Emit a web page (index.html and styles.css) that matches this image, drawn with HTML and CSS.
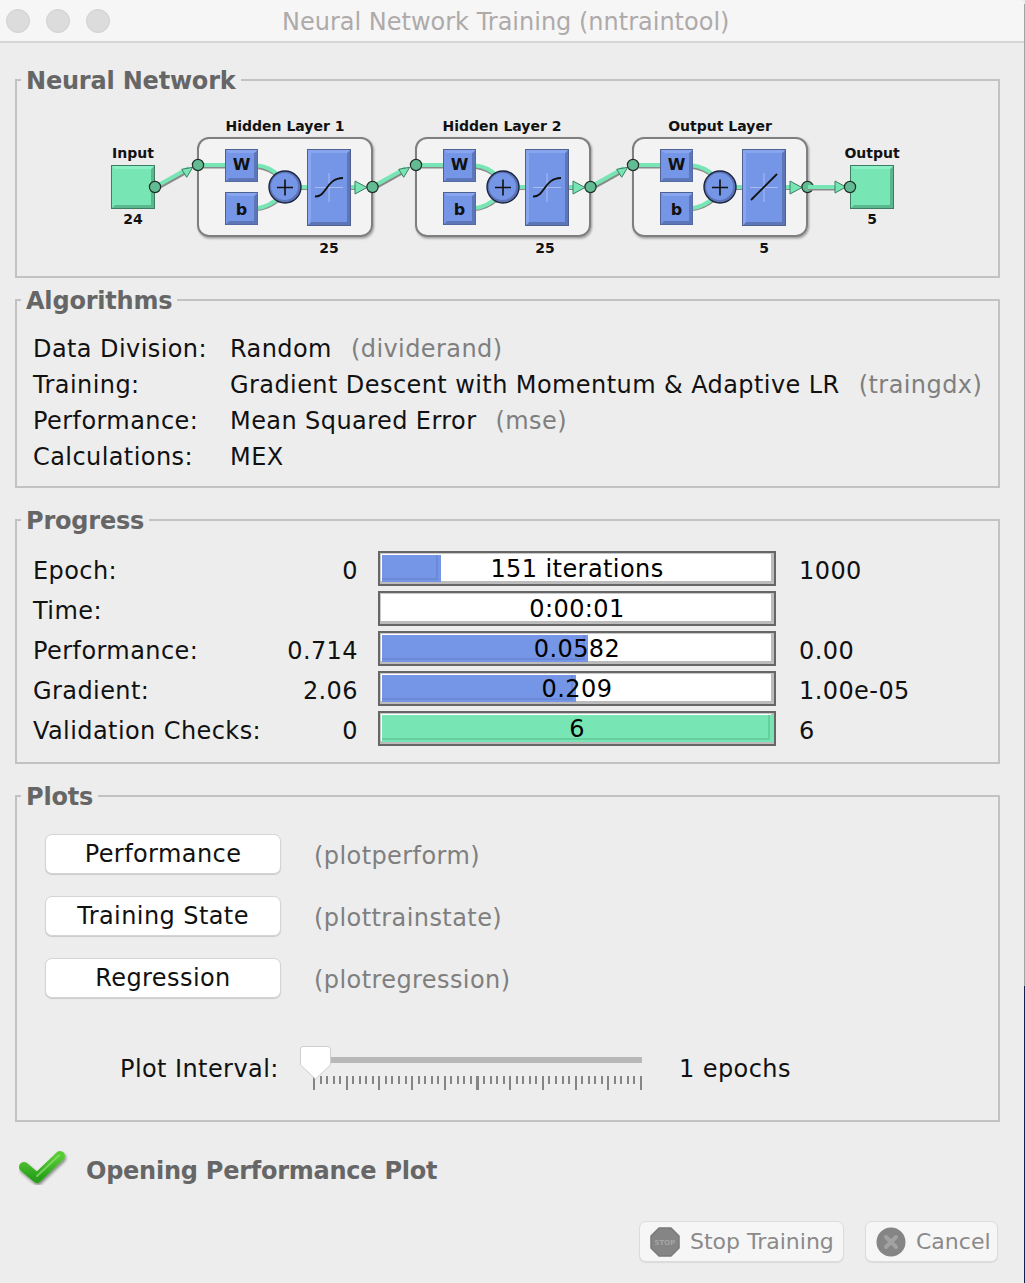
FILE: index.html
```html
<!DOCTYPE html>
<html lang="en">
<head>
<meta charset="utf-8">
<title>Neural Network Training (nntraintool)</title>
<link rel="stylesheet" href="styles.css">
</head>
<body>
<header class="titlebar">
  <div class="lights"><span class="light"></span><span class="light"></span><span class="light"></span></div>
  <div class="title">Neural Network Training (nntraintool)</div>
</header>
<main class="main">
  <fieldset class="group group-net">
    <legend>Neural Network</legend>
    <svg class="diagram" width="981" height="181" viewBox="17 95 981 181">
      <defs>
        <filter id="soft" x="-10%" y="-10%" width="120%" height="120%"><feDropShadow dx="1" dy="1.5" stdDeviation="1" flood-color="#000" flood-opacity=".35"/></filter>
        <g id="bevelS">
          <rect x="0.5" y="0.5" width="32" height="32" fill="#7596e6" stroke="#4f6091"/>
          <path d="M1 32.5L4 29H29L32.5 32.5Z M32.5 1L29 4V29L32.5 32.5Z" fill="#5d76b8"/>
          <path d="M1 1L4 4H29L32.5 1Z" fill="#87a6ef"/>
        </g>
        <g id="bevelT">
          <rect x="0.5" y="0.5" width="43" height="76" fill="#7596e6" stroke="#4f6091"/>
          <path d="M1 76L4 73H40L43 76Z M43 1L40 4V73L43 76Z" fill="#5d76b8"/>
          <path d="M1 1L4 4H40L43 1Z M1 1L4 4V73L1 76Z" fill="#87a6ef"/>
          <path d="M8 38.5H36M22 24V53" stroke="#a9bdf0" stroke-width="1" fill="none"/>
        </g>
        <g id="square">
          <rect x="0.5" y="0.5" width="43" height="43" fill="#78e6b4" stroke="#3f7d62"/>
          <path d="M1 43L4 40H40L43 43Z M43 1L40 4V40L43 43Z" fill="#5ab78e"/>
          <path d="M1 1L4 4H40L43 1Z" fill="#8cf0c6"/>
        </g>
        <g id="node"><circle r="5.6" fill="#62bb92" stroke="#1f2f28" stroke-width="1.2"/></g>
        <g id="jump">
          <path d="M0 2L34 -17" stroke="#8a8a8a" stroke-width="4.5" fill="none"/>
          <path d="M0 0L34 -19" stroke="#78e6b4" stroke-width="4" fill="none"/>
          <path d="M26.7 -17.7L37.7 -19.7L31.7 -9.7Z" fill="#78e6b4" stroke="#3f7d62"/>
        </g>
        <g id="layer">
          <rect x="0" y="0" width="174" height="98" rx="11" fill="#f3f3f3" stroke="#7f7f7f" stroke-width="2" filter="url(#soft)"/>
          <path d="M0 28.5H28M60 29Q72 31 80 38M60 71Q72 69 80 62M100 50H110M152 50H158" stroke="#8a8a8a" stroke-width="4" fill="none"/>
          <path d="M0 27H28M60 27.5Q72 29 80 37M60 70Q72 68 80 60M100 49H110M152 49H158" stroke="#78e6b4" stroke-width="4" fill="none"/>
          <use href="#bevelS" x="27" y="11"/>
          <use href="#bevelS" x="27" y="54"/>
          <circle cx="87" cy="49" r="16" fill="#5c74b6" stroke="#1c2440" stroke-width="1.4"/>
          <circle cx="86.500" cy="48.500" r="13.500" fill="#7596e6"/>
          <path d="M79 49.500H95M87 41.500V57.500" stroke="#111" stroke-width="1.6" fill="none"/>
          <use href="#bevelT" x="109" y="11"/>
          <path d="M157 43L169 49.500L157 56Z" fill="#78e6b4" stroke="#3f7d62"/>
          <use href="#node" x="0" y="27"/>
          <use href="#node" x="174.500" y="49"/>
        </g>
      </defs>
      <use href="#square" x="111" y="165"/>
      <use href="#square" x="850" y="165"/>
      <use href="#jump" x="155" y="187"/>
      <use href="#jump" x="372" y="187"/>
      <use href="#jump" x="590" y="187"/>
      <use href="#layer" x="198" y="138"/>
      <use href="#layer" x="416" y="138"/>
      <use href="#layer" x="633" y="138"/>
      <use href="#node" x="155" y="187"/>
      <path d="M315 196.500C327 197 326 178 343 178M533 196.500C545 197 544 178 561 178" stroke="#111" stroke-width="1.8" fill="none"/>
      <path d="M751 200L777 174" stroke="#111" stroke-width="1.8" fill="none"/>
      <path d="M808 188.500H836" stroke="#8a8a8a" stroke-width="4" fill="none"/>
      <path d="M808 187H836" stroke="#78e6b4" stroke-width="4" fill="none"/>
      <path d="M835 181L846 187L835 193Z" fill="#78e6b4" stroke="#3f7d62"/>
      <use href="#node" x="850" y="187"/>
      <g class="d-label">
        <text x="133" y="158">Input</text><text x="133" y="224">24</text>
        <text x="285" y="131">Hidden Layer 1</text><text x="329" y="253">25</text>
        <text x="502" y="131">Hidden Layer 2</text><text x="545" y="253">25</text>
        <text x="720" y="131">Output Layer</text><text x="764" y="253">5</text>
        <text x="872" y="158">Output</text><text x="872" y="224">5</text>
      </g>
      <g class="d-letter">
        <text x="241.500" y="170">W</text><text x="241.500" y="215">b</text>
        <text x="459.500" y="170">W</text><text x="459.500" y="215">b</text>
        <text x="676.500" y="170">W</text><text x="676.500" y="215">b</text>
      </g>
    </svg>
  </fieldset>

  <fieldset class="group group-alg">
    <legend>Algorithms</legend>
    <div class="alg-grid">
      <span>Data Division:</span><span>Random <em class="muted">(dividerand)</em></span>
      <span>Training:</span><span>Gradient Descent with Momentum &amp; Adaptive LR <em class="muted">(traingdx)</em></span>
      <span>Performance:</span><span>Mean Squared Error <em class="muted">(mse)</em></span>
      <span>Calculations:</span><span>MEX</span>
    </div>
  </fieldset>

  <fieldset class="group group-prog">
    <legend>Progress</legend>
    <div class="prog-grid">
      <span>Epoch:</span><span class="min">0</span>
      <div class="bar"><div class="fill" style="width:15%"></div><span class="bar-text">151 iterations</span></div>
      <span class="max">1000</span>

      <span>Time:</span><span class="min"></span>
      <div class="bar"><span class="bar-text">0:00:01</span></div>
      <span class="max"></span>

      <span>Performance:</span><span class="min">0.714</span>
      <div class="bar"><div class="fill" style="width:52.200%"></div><span class="bar-text">0.0582</span></div>
      <span class="max">0.00</span>

      <span>Gradient:</span><span class="min">2.06</span>
      <div class="bar"><div class="fill" style="width:49.200%"></div><span class="bar-text">0.209</span></div>
      <span class="max">1.00e-05</span>

      <span>Validation Checks:</span><span class="min">0</span>
      <div class="bar"><div class="fill green" style="width:100%"></div><span class="bar-text">6</span></div>
      <span class="max">6</span>
    </div>
  </fieldset>

  <fieldset class="group group-plots">
    <legend>Plots</legend>
    <div class="plot-list">
      <div class="plot-row"><button class="plot-btn" type="button">Performance</button><span class="muted">(plotperform)</span></div>
      <div class="plot-row"><button class="plot-btn" type="button">Training State</button><span class="muted">(plottrainstate)</span></div>
      <div class="plot-row"><button class="plot-btn" type="button">Regression</button><span class="muted">(plotregression)</span></div>
    </div>
    <div class="interval">
      <span class="interval-label">Plot Interval:</span>
      <div class="slider">
        <div class="track"></div>
        <div class="ticks"></div>
        <svg class="thumb" width="33" height="36" viewBox="0 0 33 36"><path d="M4 1.500H29Q31.500 1.500 31.500 4V20L16.500 34L1.500 20V4Q1.500 1.500 4 1.500Z" fill="#fff" stroke="#cfcfcf"/></svg>
      </div>
      <span class="interval-value">1 epochs</span>
    </div>
  </fieldset>

  <div class="status">
    <svg class="check" width="50" height="42" viewBox="0 0 50 42">
      <defs>
        <linearGradient id="gr" x1="0" y1="0" x2="0" y2="1"><stop offset="0" stop-color="#58cc36"/><stop offset="1" stop-color="#2a9f1c"/></linearGradient>
        <filter id="cs" x="-20%" y="-20%" width="140%" height="150%"><feDropShadow dx="1" dy="2" stdDeviation="1.500" flood-color="#000" flood-opacity=".45"/></filter>
      </defs>
      <path d="M5 18L18 29L41 7" stroke="url(#gr)" stroke-width="10" stroke-linecap="round" stroke-linejoin="round" fill="none" filter="url(#cs)"/>
      <path d="M18 27L40 6.500" stroke="#8fe070" stroke-width="2" stroke-linecap="round" fill="none" opacity=".7"/>
    </svg>
    <span class="status-text">Opening Performance Plot</span>
  </div>

  <div class="actions">
    <button class="act-btn act-stop" type="button">
      <svg class="act-icon" width="32" height="32" viewBox="0 0 32 32"><path d="M10 2H22L30 10V22L22 30H10L2 22V10Z" fill="#858585" stroke="#7a7a7a" stroke-width="1.500" stroke-linejoin="round"/><text x="16" y="18.500" class="stop-text">STOP</text></svg>
      <span>Stop Training</span>
    </button>
    <button class="act-btn act-cancel" type="button">
      <svg class="act-icon" width="32" height="32" viewBox="0 0 32 32"><circle cx="16" cy="16" r="14.500" fill="#858585"/><path d="M11 11L21 21M21 11L11 21" stroke="#a2a2a2" stroke-width="4" stroke-linecap="round"/></svg>
      <span>Cancel</span>
    </button>
  </div>
</main>
</body>
</html>
```
FILE: styles.css
```css
* { box-sizing: border-box; }
html, body { margin: 0; padding: 0; }
body {
  position: relative;
  width: 1025px;
  height: 1283px;
  overflow: hidden;
  background: #ededed;
  font-family: "DejaVu Sans", sans-serif;
  font-size: 24px;
  color: #111;
}
body::after {
  content: "";
  position: absolute;
  top: 4px;
  right: 0;
  bottom: 0;
  width: 1px;
  background: linear-gradient(#a3a3a3 0 982px, #16204a 982px);
}
.titlebar {
  display: flex;
  align-items: center;
  height: 43px;
  padding-left: 6px;
  background: #f6f6f6;
  border-bottom: 2px solid #d6d6d6;
  border-top-right-radius: 6px;
}
.lights { display: flex; gap: 16px; }
.light {
  width: 24px;
  height: 24px;
  border-radius: 50%;
  background: #dcdcdc;
  border: 1px solid #d0d0d0;
}
.title {
  margin-left: 172px;
  padding-top: 2px;
  font-size: 24px;
  color: #aeaaaa;
  white-space: nowrap;
}
.main { padding: 22px 25px 0 15px; letter-spacing: .42px; }
.group {
  margin: 0;
  padding: 0;
  min-width: 0;
  border: 2px solid #c2c2c2;
}
.group legend {
  margin-left: 4px;
  padding: 0 5px;
  height: 30px;
  line-height: 32px;
  font-size: 24px;
  letter-spacing: -.2px;
  font-weight: 700;
  color: #666;
}
.group-net { height: 213px; }
.group-alg { margin-top: 7px; height: 203px; }
.group-prog { margin-top: 17px; height: 259px; }
.group-plots { margin-top: 17px; height: 341px; }
.diagram { display: block; letter-spacing: 0; }
.d-label text {
  font-size: 14px;
  font-weight: 700;
  text-anchor: middle;
  fill: #111;
}
.d-letter text {
  font-size: 16px;
  font-weight: 700;
  text-anchor: middle;
  fill: #111;
}
.alg-grid {
  display: grid;
  grid-template-columns: 197px 1fr;
  grid-auto-rows: 36px;
  align-items: center;
  padding: 16px 0 0 16px;
  white-space: nowrap;
}
.muted {
  font-style: normal;
  color: #7f7f7f;
}
.alg-grid .muted { margin-left: 11px; }
.prog-grid {
  display: grid;
  grid-template-columns: 239px 106px 398px 1fr;
  grid-auto-rows: 40px;
  align-items: center;
  padding: 15px 0 0 16px;
  white-space: nowrap;
}
.prog-grid > span { padding-top: 2px; }
.min { text-align: right; padding-right: 20px; }
.max { padding-left: 23px; }
.bar {
  position: relative;
  align-self: start;
  height: 35px;
  margin-top: 1px;
  display: flex;
  background: #fff;
  border: 2px solid #666;
  box-shadow: inset -3px -3px 0 #bcbcbc, inset 1px 1px 0 #c8c8c8;
}
.fill {
  position: relative;
  height: 27px;
  margin: 2px 0 0 2px;
  background: #7596e6;
}
.fill::after {
  content: "";
  position: absolute;
  left: 0;
  top: 0;
  right: 3px;
  bottom: 2px;
  border-right: 2px solid #6a89d6;
  border-bottom: 2px solid #6a89d6;
}
.fill.green { background: #78e6b4; width: calc(100% - 3px) !important; }
.fill.green::after { border-color: #66cf9f; }
.bar-text {
  position: absolute;
  inset: 0;
  display: flex;
  align-items: center;
  justify-content: center;
  color: #000;
}
.plot-list {
  display: flex;
  flex-direction: column;
  gap: 22px;
  padding: 23px 0 0 28px;
}
.plot-row { display: flex; align-items: center; gap: 33px; }
.plot-row .muted { padding-top: 4px; }
.plot-btn {
  width: 236px;
  height: 40px;
  padding: 0;
  font: inherit;
  letter-spacing: inherit;
  color: #111;
  background: #fff;
  border: 1px solid #d4d4d4;
  border-radius: 7px;
  box-shadow: 0 1px 1px rgba(0,0,0,.15);
}
.interval {
  display: flex;
  align-items: flex-start;
  margin-top: 46px;
  padding-left: 103px;
  white-space: nowrap;
}
.interval-label { width: 180px; line-height: 50px; }
.slider {
  position: relative;
  width: 343px;
  height: 48px;
}
.track {
  margin: 13px 0 0 30px;
  width: 312px;
  height: 6px;
  background: #b8b8b8;
}
.ticks {
  margin: 13px 0 0 13px;
  width: 329px;
  height: 14px;
  background:
    repeating-linear-gradient(90deg, #858585 0 2px, transparent 2px 32.700px) 0 0 / 100% 14px no-repeat,
    repeating-linear-gradient(90deg, #858585 0 2px, transparent 2px 6.540px) 0 0 / 100% 8px no-repeat;
}
.thumb {
  position: absolute;
  left: -1px;
  top: 1px;
}
.interval-value { margin-left: 36px; line-height: 50px; }
.status {
  display: flex;
  align-items: center;
  height: 60px;
  margin-top: 18px;
  padding-left: 4px;
}
.check { display: block; }
.status-text {
  margin-left: 17px;
  padding-top: 2px;
  font-size: 24px;
  letter-spacing: -.25px;
  font-weight: 700;
  color: #666;
}
.actions {
  display: flex;
  justify-content: flex-end;
  gap: 21px;
  margin-top: 21px;
  padding-right: 2px;
}
.act-btn {
  display: flex;
  align-items: center;
  height: 41px;
  padding: 0 8px 0 9px;
  font: inherit;
  font-size: 22px;
  letter-spacing: 0;
  white-space: nowrap;
  color: #8a8a8a;
  background: #f6f6f6;
  border: 1px solid #dcdcdc;
  border-radius: 7px;
  box-shadow: 0 1px 1px rgba(0,0,0,.08);
}
.act-stop { width: 205px; }
.act-cancel { width: 133px; }
.act-icon { flex: none; margin-right: 9px; filter: blur(.5px); }
.stop-text {
  font-size: 7px;
  font-weight: 700;
  text-anchor: middle;
  fill: #a5a5a5;
}
```
